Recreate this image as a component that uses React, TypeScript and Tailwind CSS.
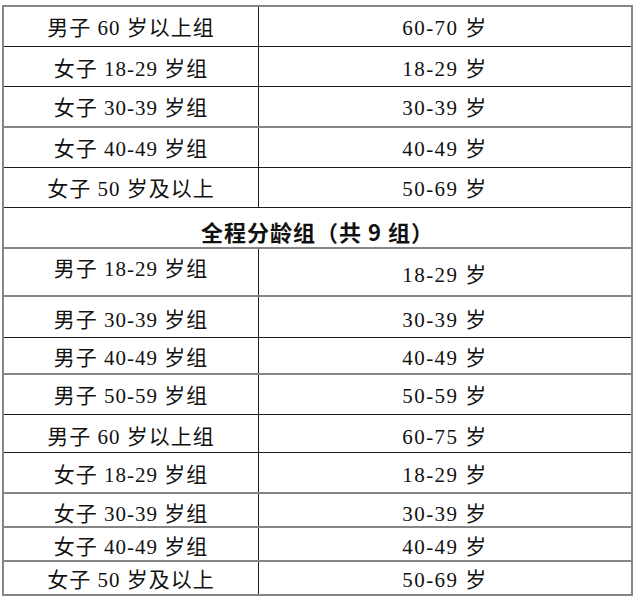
const rowsA = [
  { name: "男子 60 岁以上组", age: "60-70 岁", h: "h-[40px]", line: "border-b border-[#1a1a1a]", pl: "pt-[3px]", pr: "pt-[3px]" },
  { name: "女子 18-29 岁组", age: "18-29 岁", h: "h-[40px]", line: "border-b border-[#1a1a1a]", pl: "pt-[6px]", pr: "pt-[6px]" },
  { name: "女子 30-39 岁组", age: "30-39 岁", h: "h-[41px]", line: "border-b-2 border-[#858585]", pl: "pt-[3px]", pr: "pt-[3px]" },
  { name: "女子 40-49 岁组", age: "40-49 岁", h: "h-[40px]", line: "border-b border-[#1a1a1a]", pl: "pt-[4px]", pr: "pt-[4px]" },
  { name: "女子 50 岁及以上", age: "50-69 岁", h: "h-[40px]", line: "border-b border-[#1a1a1a]", pl: "pt-[3px]", pr: "pt-[3px]" },
];

const rowsB = [
  { name: "男子 18-29 岁组", age: "18-29 岁", h: "h-[48px]", line: "border-b-2 border-[#858585]", pl: "pb-[5px]", pr: "pt-[7px]" },
  { name: "男子 30-39 岁组", age: "30-39 岁", h: "h-[41px]", line: "border-b border-[#1a1a1a]", pl: "pt-[6px]", pr: "pt-[6px]" },
  { name: "男子 40-49 岁组", age: "40-49 岁", h: "h-[37px]", line: "border-b-2 border-[#858585]", pl: "pt-[5px]", pr: "pt-[5px]" },
  { name: "男子 50-59 岁组", age: "50-59 岁", h: "h-[40px]", line: "border-b border-[#1a1a1a]", pl: "pt-[4px]", pr: "pt-[4px]" },
  { name: "男子 60 岁以上组", age: "60-75 岁", h: "h-[38px]", line: "border-b border-[#1a1a1a]", pl: "pt-[7px]", pr: "pt-[7px]" },
  { name: "女子 18-29 岁组", age: "18-29 岁", h: "h-[41px]", line: "border-b-2 border-[#858585]", pl: "pt-[5px]", pr: "pt-[5px]" },
  { name: "女子 30-39 岁组", age: "30-39 岁", h: "h-[34px]", line: "border-b-2 border-[#858585]", pl: "pt-[9px]", pr: "pt-[9px]" },
  { name: "女子 40-49 岁组", age: "40-49 岁", h: "h-[34px]", line: "border-b-2 border-[#858585]", pl: "pt-[6px]", pr: "pt-[6px]" },
  { name: "女子 50 岁及以上", age: "50-69 岁", h: "h-[34px]", line: "border-b-2 border-[#858585]", pl: "pt-[5px]", pr: "pt-[5px]" },
];

type Row = (typeof rowsA)[number];

function AgeRow({ row }: { row: Row }) {
  return (
    <div className={`flex ${row.h} ${row.line}`}>
      <div className={`w-[255px] shrink-0 border-r border-[#1a1a1a] flex items-center justify-center ${row.pl}`}>
        <span className="tracking-[1px]">{row.name}</span>
      </div>
      <div className={`flex-1 flex items-center justify-center ${row.pr}`}>
        <span className="tracking-[1.5px]">{row.age}</span>
      </div>
    </div>
  );
}

export default function App() {
  return (
    <div className="w-[637px] h-[599px] bg-white pt-[5px] pl-[2px]">
      <div
        className="w-[631px] border-t-2 border-l-2 border-r-2 border-[#858585] text-[21px] leading-none text-[#111]"
        style={{ fontFamily: '"Liberation Serif", "Noto Sans CJK SC", serif' }}
      >
        {rowsA.map((r, i) => (
          <AgeRow key={"a" + i} row={r} />
        ))}
        <div className="h-[41px] border-b-2 border-[#858585] flex items-center justify-center pt-[6px]">
          <span
            className="text-[22px] font-bold leading-none tracking-[1px]"
            style={{ fontFamily: '"Noto Sans CJK SC", "Noto Sans", sans-serif' }}
          >
            全程分龄组（共 9 组）
          </span>
        </div>
        {rowsB.map((r, i) => (
          <AgeRow key={"b" + i} row={r} />
        ))}
      </div>
    </div>
  );
}
